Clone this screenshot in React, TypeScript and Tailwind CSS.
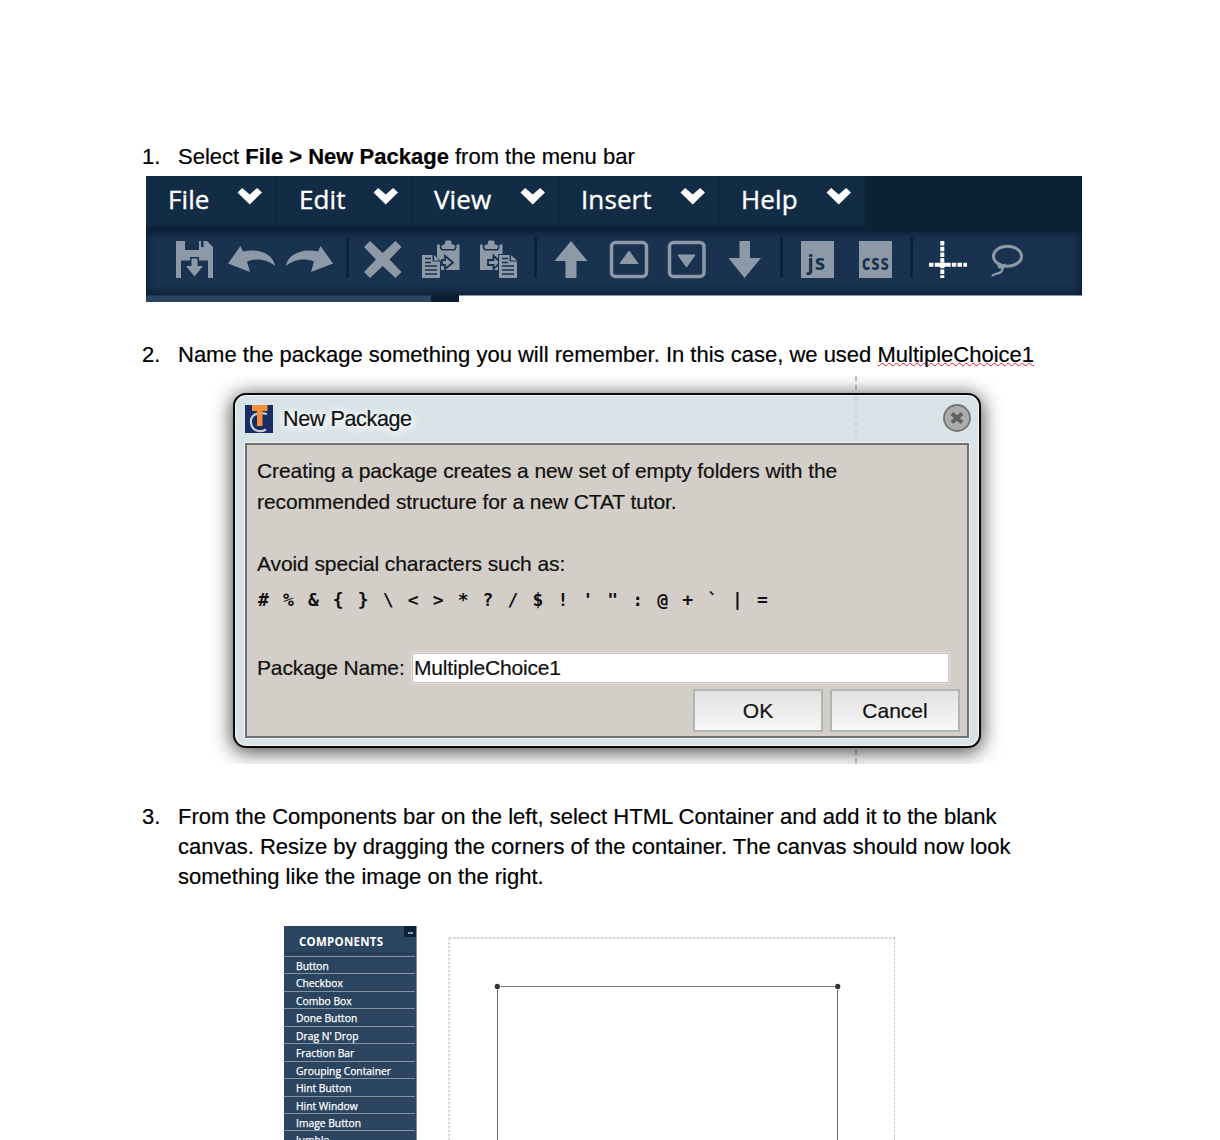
import type { ReactNode } from "react";

const INK = "#8d99a6";
const BAR = "#18324f";

function Cell({ x, w = 58, children }: { x: number; w?: number; children: ReactNode }) {
  return (
    <svg width={w} height={64} viewBox={`${x} 231 ${w} 64`} fill={INK} className="block shrink-0">
      {children}
    </svg>
  );
}

function Divider() {
  return (
    <div className="flex h-16 w-[14px] shrink-0 justify-center pt-[6px]">
      <div className="h-[41px] w-[3px] bg-[#0c2238]" />
    </div>
  );
}

const arrow = "M228 263.500 L240.500 246 L243 251.500 C257 248 273 253 275 266 C268 260 258 257.500 247 261.500 L250 272 Z";

function Clipboard({ x }: { x: number }) {
  return (
    <g transform={`translate(${x} 0)`}>
      <path d="M0 244.500 H22.500 V270 H0 Z" />
      <path d="M2.800 244 H19.500 V248 L18 250.500 H4.500 L2.800 248 Z" fill={BAR} />
      <path d="M4 246.500 Q5 244.500 8 244 V241.500 Q8.500 240.500 9.500 240.500 H13 Q14 240.500 14.500 241.500 V244 Q17.500 244.500 18.500 246.500 L17 249 H5.500 Z" />
    </g>
  );
}

function Page({ x }: { x: number }) {
  return (
    <g transform={`translate(${x} 0)`}>
      <path d="M-1 254 H12 L19 261 V279 H-1 Z" fill={BAR} />
      <path d="M0 255 H10.500 V261.500 H18 V278 H0 Z M12 255 L18 260.500 H12 Z" />
      <path d="M3 258.500 H9 M3 262.500 H9 M3 266 H15 M3 270 H15 M3 274 H15" stroke={BAR} strokeWidth="1.300" />
    </g>
  );
}

function Menu({ label, width, pad }: { label: string; width: string; pad: string }) {
  return (
    <div className={`flex h-[50px] shrink-0 justify-between border-r-2 border-[#0f263d] bg-[#122c45] pr-[12px] ${width} ${pad}`}>
      <span className="h-[48px] text-[26px] leading-[47px] tracking-[0.100px] text-white [-webkit-text-stroke:0.35px_white]">{label}</span>
      <svg width="26" height="18" viewBox="0 0 26 18" className="mt-[11px] shrink-0">
        <path d="M0.500 5.500 L5.200 1 L12.700 7.500 L20.200 1 L25 5.500 L12.700 17.500 Z" fill="#fff" />
      </svg>
    </div>
  );
}

function EditorBar() {
  return (
    <div className="mt-[4px] ml-[146px] h-[126px] w-[936px] overflow-hidden">
      <div className="flex h-[55px] bg-[#0b2136] font-['Open_Sans',sans-serif]">
        <Menu label="File" width="w-[131px]" pad="pl-[22px]" />
        <Menu label="Edit" width="w-[136px]" pad="pl-[22px]" />
        <Menu label="View" width="w-[147px]" pad="pl-[21px]" />
        <Menu label="Insert" width="w-[160px]" pad="pl-[21px]" />
        <Menu label="Help" width="w-[146px]" pad="pl-[21px]" />
      </div>
      <div className="flex h-16 bg-[#18324f] pl-5 shadow-[inset_0_0_9px_1px_#071a2c]">
        <Cell x={166}>
          <path d="M176 241 H185 V250 H199 V241 H201 V247 H203.500 V241 H207 L213 247 V278 H208 V260.500 H199 V257 H190 V260.500 H181 V278 H176 Z" />
          <path d="M191.500 258.500 H197.500 V266 H203 L194.500 276.500 L186 266 H191.500 Z" />
        </Cell>
        <Cell x={224}>
          <path d={arrow} />
        </Cell>
        <Cell x={282}>
          <path d={arrow} transform="matrix(-1 0 0 1 561 0)" />
        </Cell>
        <Divider />
        <Cell x={354}>
          <path d="M364 247 L370 241 L382.700 253 L395.500 241 L401.500 247 L389.500 259.500 L401.500 272 L395.500 278 L382.700 266 L370 278 L364 272 L376 259.500 Z" />
        </Cell>
        <Cell x={412}>
          <Clipboard x={437} />
          <Page x={422} />
          <path d="M442 260 H445 V256 L453 262.500 L445 269 V265 H442 Z" stroke={BAR} strokeWidth="1.800" />
        </Cell>
        <Cell x={470}>
          <Clipboard x={480} />
          <path d="M488 260 H493.500 V255.500 L500.500 262.500 L493.500 269 V265 H488 Z" stroke={BAR} strokeWidth="1.800" />
          <Page x={499} />
        </Cell>
        <Divider />
        <Cell x={542}>
          <path d="M571 241 L587.500 261 H576.500 V278 H565.500 V261 H554.500 Z" />
        </Cell>
        <Cell x={600}>
          <rect x="611.500" y="242.500" width="35" height="34" rx="4" fill="none" stroke={INK} strokeWidth="3.500" />
          <path d="M629 251 L638 263.500 H620 Z" strokeLinejoin="round" stroke={INK} />
        </Cell>
        <Cell x={658}>
          <rect x="669.500" y="242.500" width="34.500" height="34" rx="4" fill="none" stroke={INK} strokeWidth="3.500" />
          <path d="M686.500 267 L678 255 H695 Z" strokeLinejoin="round" stroke={INK} />
        </Cell>
        <Cell x={716}>
          <path d="M744.500 278 L728.500 258 H739.500 V241 H750 V258 H761 Z" />
        </Cell>
        <Divider />
        <div className="flex h-16 w-[58px] shrink-0 justify-center pt-[10px]">
          <div className="h-[37px] w-[33px] bg-[#8d99a6] pt-[9px] text-center font-['Noto_Sans',sans-serif] text-[22px] leading-[22px] font-bold tracking-[1px] text-[#18324f]">
            <span className="inline-block scale-x-95">js</span>
          </div>
        </div>
        <div className="flex h-16 w-[58px] shrink-0 justify-center pt-[10px]">
          <div className="flex h-[37px] w-[33px] justify-center bg-[#8d99a6] pt-[9px] font-['Noto_Sans',sans-serif] text-[22px] leading-[22px] font-bold tracking-[1px] text-[#18324f]">
            <span className="inline-block translate-x-[0.5px] scale-x-76">css</span>
          </div>
        </div>
        <Divider />
        <Cell x={918}>
          <path d="M942.300 241 V278" stroke="#fff" strokeWidth="4" strokeDasharray="4.500 1.200" />
          <path d="M929 264.800 H967" stroke="#fff" strokeWidth="4" strokeDasharray="4.500 1.200" />
          <path d="M938.500 264.800 H946" stroke="#fff" strokeWidth="4" />
        </Cell>
        <Cell x={976}>
          <g fill="none" stroke={INK} strokeWidth="3">
            <ellipse cx="1007.500" cy="256.200" rx="14" ry="10" />
            <path d="M992 276 C995 272 1003 275.500 1003 267 C999 263.500 997 266 1000 267.500 C1003 268 1006 266 1004 264" strokeWidth="2.300" />
          </g>
        </Cell>
      </div>
      <div className="flex h-[7px]">
        <div className="w-[285px] border-t border-[#203750] bg-[#2b4560]" />
        <div className="w-[28px] bg-[#0a1e32]" />
        <div className="flex-1 border-t border-[#8793a0] bg-white" />
      </div>
    </div>
  );
}

function Logo() {
  return (
    <svg width="28" height="28" viewBox="0 0 28 28" className="block">
      <rect width="28" height="28" fill="#192c61" />
      <path d="M22 9 C11 6 5 11 6 18 C7 26 15 28 21 24.500" fill="none" stroke="#c5cddd" strokeWidth="2.200" />
      <path d="M7 0 H22.500 V6 H17.500 V21 H12 V6 H7 Z" fill="#f1913a" />
    </svg>
  );
}

function Dialog() {
  return (
    <div className="relative mt-[6px] ml-[205px] h-[388px] w-[806px] overflow-hidden">
      <div className="mt-[17px] ml-[28px] h-[355px] w-[748px] rounded-[13px] border-2 border-[#090909] bg-[#d8e3e8] px-[10px] font-['Liberation_Sans',Arial,sans-serif] text-[#111] shadow-[0_3px_20px_1px_rgba(0,0,0,0.720),inset_0_0_1px_1px_#f1f6f8] [-webkit-text-stroke:0.2px_#111]">
        <div className="flex h-[48px] items-start pt-[10px]">
          <Logo />
          <span className="ml-[10px] text-[21.500px] leading-[28px] tracking-[-0.360px] whitespace-nowrap [text-shadow:0_0_8px_#fff,0_0_10px_#fff,3px_3px_8px_#fff]">New Package</span>
          <svg width="28" height="28" viewBox="0 0 28 28" className="-mt-[1px] mr-[-2px] ml-auto">
            <circle cx="14" cy="14" r="13" fill="#acacac" stroke="#747474" strokeWidth="1.800" />
            <path d="M9 9.500 L19 18.500 M19 9.500 L9 18.500" stroke="#626262" strokeWidth="4" />
          </svg>
        </div>
        <div className="h-[295px] w-[724px] border-2 border-[#70706f] bg-[#d3cec8] pl-[10px] shadow-[0_0_0_1px_#edf2f4]">
          <p className="pt-[10px] text-[21px] leading-[31.200px] tracking-[-0.095px] whitespace-nowrap">
            <span className="block">Creating a package creates a new set of empty folders with the</span>
            <span className="block">recommended structure for a new CTAT tutor.</span>
            <span className="block h-[31px]" />
            <span className="block">Avoid special characters such as:</span>
          </p>
          <p className="mt-[4px] pl-[1px] font-['DejaVu_Sans_Mono',monospace] text-[18px] leading-[31px] font-bold tracking-[1.640px] whitespace-nowrap [-webkit-text-stroke:0]">{"# % & { } \\ < > * ? / $ ! ' \" : @ + ` | ="}</p>
          <div className="mt-[37px] flex h-[33px] items-center text-[21px]">
            <span className="w-[155px] tracking-[-0.140px] whitespace-nowrap">Package Name:</span>
            <div className="h-[30px] w-[537px] border border-[#c4c4c4] bg-white pl-[1px] leading-[28px] tracking-[-0.180px] shadow-[0_0_0_1px_#e4e2df]">MultipleChoice1</div>
          </div>
          <div className="mt-[4px] mr-[7px] flex justify-end gap-[7px] text-center text-[21px] leading-[40px]">
            <div className="h-[43px] w-[130px] border-2 border-[#b3b4b5] bg-linear-to-b from-[#e2e2e2] to-[#f7f7f7]">OK</div>
            <div className="h-[43px] w-[130px] border-2 border-[#b3b4b5] bg-linear-to-b from-[#e2e2e2] to-[#f7f7f7]">Cancel</div>
          </div>
        </div>
      </div>
      <svg width="2" height="388" className="absolute top-0 left-[650px]">
        <path d="M1 0 V16" stroke="#000" strokeOpacity="0.300" strokeWidth="1.500" strokeDasharray="5 3.500" />
        <path d="M1 20 V65" stroke="#c5d0d5" strokeWidth="1.500" strokeDasharray="5 3.500" />
        <path d="M1 374 V388" stroke="#000" strokeOpacity="0.300" strokeWidth="1.500" strokeDasharray="5 3.500" />
      </svg>
    </div>
  );
}

const components = [
  "Button", "Checkbox", "Combo Box", "Done Button", "Drag N' Drop", "Fraction Bar",
  "Grouping Container", "Hint Button", "Hint Window", "Image Button", "Jumble",
];

function ComponentsPanel() {
  return (
    <div className="h-[214px] w-[133px] shrink-0 overflow-hidden border-r border-[#7d8c9b] bg-[#2b4460] font-['Open_Sans',sans-serif] text-white">
      <div className="flex h-[28px] justify-between border-b border-[#1c3551]">
        <span className="pl-[15px] text-[11.500px] leading-[31px] font-bold tracking-[0.250px]">COMPONENTS</span>
        <div className="flex h-[11px] w-[12px] items-center justify-center bg-[#0b2138]">
          <div className="mt-[3px] h-[2px] w-[5px] bg-[#8e9aa6]" />
        </div>
      </div>
      <div className="mt-[2px] mr-[1px]">
        {components.map((name) => (
          <div key={name} className="h-[17.450px] border-t border-[#8592a1] pl-[12px] text-[10.300px] leading-[19.600px] font-medium whitespace-nowrap [-webkit-text-stroke:0.25px_white]">{name}</div>
        ))}
      </div>
    </div>
  );
}

function CanvasPreview() {
  return (
    <svg width="450" height="203" viewBox="448 937 450 203" className="mt-[11px] ml-[31px] block shrink-0">
      <g fill="none" stroke="#c4c4c4">
        <path d="M449 938 H895" strokeWidth="1.300" strokeDasharray="2.500 1.500" />
        <path d="M449.200 938 V1140" stroke="#d5d5d5" strokeWidth="1.800" strokeDasharray="2.500 1.500" />
        <path d="M894.500 938 V1140" strokeWidth="1" strokeDasharray="2.500 1.500" />
      </g>
      <path d="M500.500 986.500 H835" stroke="#777" />
      <path d="M497.500 989.500 V1140 M837.500 989.500 V1140" stroke="#666" />
      <circle cx="497.300" cy="986.400" r="2.600" fill="#333" />
      <circle cx="837.700" cy="986.400" r="2.600" fill="#333" />
    </svg>
  );
}

function Step({ n, className, children }: { n: number; className: string; children: ReactNode }) {
  return (
    <div className={`flex pl-[142px] text-[22px] leading-[30px] whitespace-nowrap text-black [-webkit-text-stroke:0.2px_black] ${className}`}>
      <span className="w-[36px] shrink-0">{n}.</span>
      <div>{children}</div>
    </div>
  );
}

export default function App() {
  return (
    <main className="flex h-[1140px] w-[1220px] flex-col overflow-hidden bg-white font-['Liberation_Sans',Arial,sans-serif]">
      <Step n={1} className="pt-[142px]">
        Select <b>File &gt; New Package</b> from the menu bar
      </Step>
      <EditorBar />
      <Step n={2} className="mt-[38px]">
        Name the package something you will remember. In this case, we used{" "}
        <span className="underline decoration-[#e5202e] decoration-wavy decoration-[1.2px] underline-offset-[0px] [text-decoration-skip-ink:none]">MultipleChoice1</span>
      </Step>
      <Dialog />
      <Step n={3} className="mt-[38px]">
        <span className="block">From the Components bar on the left, select HTML Container and add it to the blank</span>
        <span className="block">canvas. Resize by dragging the corners of the container. The canvas should now look</span>
        <span className="block">something like the image on the right.</span>
      </Step>
      <div className="mt-[34px] ml-[284px] flex">
        <ComponentsPanel />
        <CanvasPreview />
      </div>
    </main>
  );
}
